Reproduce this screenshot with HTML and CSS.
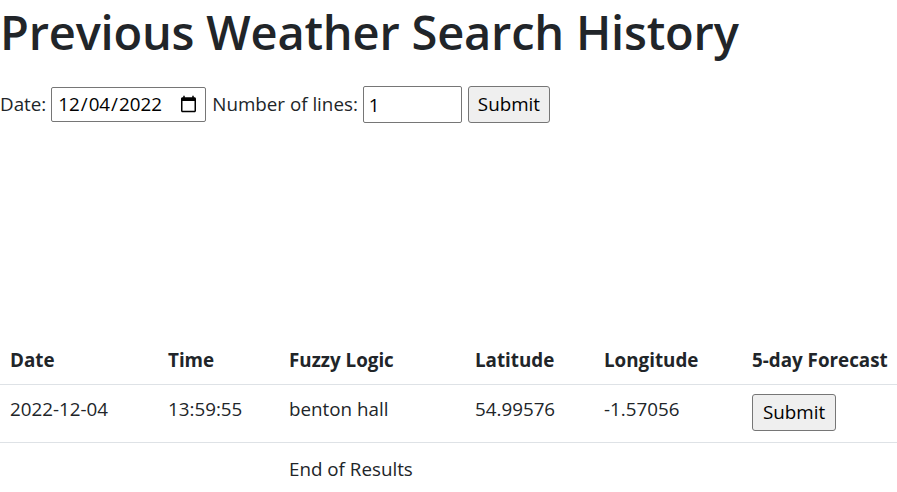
FILE: index.html
```html
<!DOCTYPE html>
<html lang="en">
<head>
<meta charset="utf-8">
<title>Previous Weather Search History</title>
<link rel="stylesheet" href="styles.css">
</head>
<body>
<main class="page">
  <h1 class="title">Previous Weather Search History</h1>
  <form class="search-form">
    <label class="field">Date: <input class="date-input" type="date" value="2022-12-04"></label>
    <label class="field">Number of lines: <input class="num-input" type="number" value="1"></label>
    <button class="btn" type="button">Submit</button>
  </form>
  <table class="history">
    <colgroup>
      <col class="c-date">
      <col class="c-time">
      <col class="c-fuzzy">
      <col class="c-lat">
      <col class="c-lon">
      <col class="c-fc">
    </colgroup>
    <thead>
      <tr>
        <th>Date</th>
        <th>Time</th>
        <th>Fuzzy Logic</th>
        <th>Latitude</th>
        <th>Longitude</th>
        <th>5-day Forecast</th>
      </tr>
    </thead>
    <tbody>
      <tr>
        <td>2022-12-04</td>
        <td>13:59:55</td>
        <td>benton hall</td>
        <td>54.99576</td>
        <td>-1.57056</td>
        <td><button class="btn btn-wide" type="button">Submit</button></td>
      </tr>
      <tr class="end-row">
        <td></td>
        <td></td>
        <td>End of Results</td>
        <td></td>
        <td></td>
        <td></td>
      </tr>
    </tbody>
  </table>
</main>
</body>
</html>
```
FILE: styles.css
```css
html, body {
  margin: 0;
  padding: 0;
  background: #ffffff;
}

body {
  font-family: "Segoe UI", "Open Sans", "Noto Sans", sans-serif;
  font-size: 18.8px;
  line-height: 1.5;
  color: #212529;
}

.page {
  display: flex;
  flex-direction: column;
}

.title {
  margin: 0 0 22px;
  font-size: 47px;
  font-weight: 600;
  line-height: 64px;
  letter-spacing: -0.2px;
  white-space: nowrap;
}

.search-form {
  display: flex;
  align-items: center;
  gap: 6px;
  height: 37px;
}

.field {
  display: inline-flex;
  align-items: center;
  gap: 5px;
}

.date-input,
.num-input {
  box-sizing: border-box;
  font: inherit;
  color: #000000;
  border: 1px solid #767676;
  border-radius: 2px;
  background: #ffffff;
  margin: 0;
}

.date-input {
  width: 155px;
  height: 35px;
  padding: 0 5px;
}

.num-input {
  width: 99px;
  height: 37px;
  padding: 0 5px;
}

.btn {
  box-sizing: border-box;
  font: inherit;
  color: #000000;
  height: 37px;
  padding: 0 9px;
  margin: 0;
  background: #efefef;
  border: 1px solid #767676;
  border-radius: 3px;
  line-height: 1;
}

.btn-wide {
  padding: 0 10px;
}

.history {
  margin-top: 213px;
  width: 100%;
  border-collapse: collapse;
  table-layout: fixed;
}

.c-date { width: 158px; }
.c-time { width: 121px; }
.c-fuzzy { width: 186px; }
.c-lat { width: 129px; }
.c-lon { width: 148px; }
.c-fc { width: 155px; }

.history th {
  text-align: left;
  font-weight: 700;
  padding: 9px 9px 9px 10px;
  line-height: 30px;
  border-bottom: 1px solid #dee2e6;
  vertical-align: top;
  white-space: nowrap;
}

.history td {
  padding: 9px 9px 11px 10px;
  line-height: 31px;
  border-bottom: 1px solid #dee2e6;
  vertical-align: top;
  white-space: nowrap;
}

.history .end-row td {
  padding-top: 11px;
  border-bottom: none;
}
```
